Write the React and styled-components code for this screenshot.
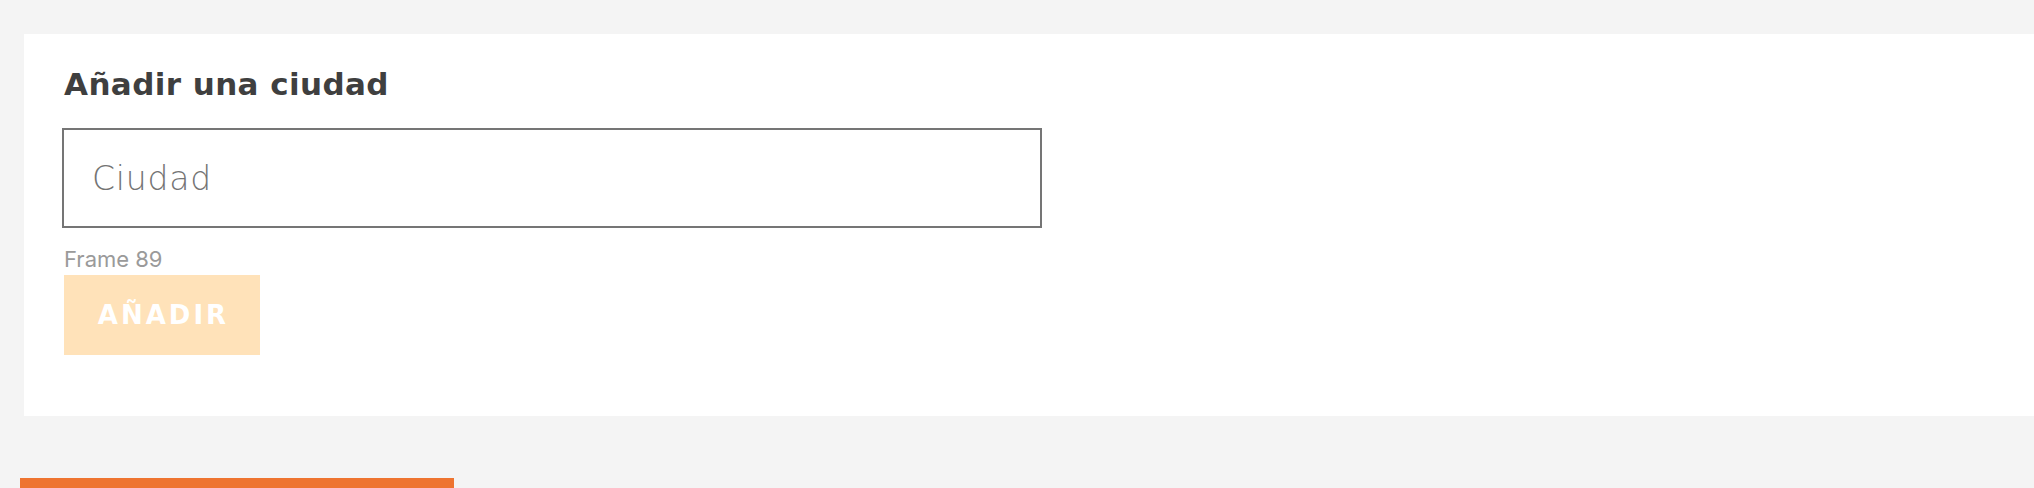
import React from "react";
import styled, { createGlobalStyle } from "styled-components";

const GlobalStyle = createGlobalStyle`
  html, body {
    margin: 0;
    padding: 0;
    overflow: hidden;
    background: #f4f4f4;
  }
`;

const Page = styled.div`
  padding-top: 34px;
  font-family: "DejaVu Sans", sans-serif;
`;

const Panel = styled.section`
  margin-left: 24px;
  background: #ffffff;
  padding: 35px 0 61px 38px;
  display: flex;
  flex-direction: column;
  align-items: flex-start;
`;

const Title = styled.h2`
  margin: 0 0 28px 2px;
  font-size: 31px;
  line-height: 31px;
  font-weight: 700;
  letter-spacing: 0.4px;
  color: #3f3f3f;
`;

const CityInput = styled.input`
  box-sizing: border-box;
  width: 980px;
  height: 100px;
  border: 2px solid #757575;
  border-radius: 0;
  padding: 0 0 0 28px;
  margin: 0;
  outline: none;
  background: #fff;
  font-family: "DejaVu Sans", sans-serif;
  font-weight: 200;
  font-size: 33px;
  letter-spacing: 0.8px;
  color: #555;

  &::placeholder {
    color: #747474;
  }
`;

const FrameLabel = styled.span`
  margin: 19px 0 3px 2px;
  font-family: Inter, "Liberation Sans", sans-serif;
  font-size: 22px;
  line-height: 25px;
  color: #9a9a9a;
`;

const AddButton = styled.button`
  margin-left: 2px;
  width: 196px;
  height: 80px;
  border: none;
  padding: 0 0 0 3px;
  background: ${(p) => (p.disabled ? "#ffe2b9" : "#ee7430")};
  color: #ffffff;
  font-family: "DejaVu Sans", sans-serif;
  font-weight: 700;
  font-size: 26px;
  letter-spacing: 3px;
  text-transform: uppercase;
  cursor: pointer;
`;

const BottomBar = styled.div`
  margin: 62px 0 0 20px;
  width: 434px;
  height: 10px;
  background: #ee7430;
`;

const App = () => {
  return (
    <>
      <GlobalStyle />
      <Page>
        <Panel>
          <Title>Añadir una ciudad</Title>
          <CityInput type="text" placeholder="Ciudad" />
          <FrameLabel>Frame 89</FrameLabel>
          <AddButton disabled>Añadir</AddButton>
        </Panel>
        <BottomBar />
      </Page>
    </>
  );
};

export default App;
